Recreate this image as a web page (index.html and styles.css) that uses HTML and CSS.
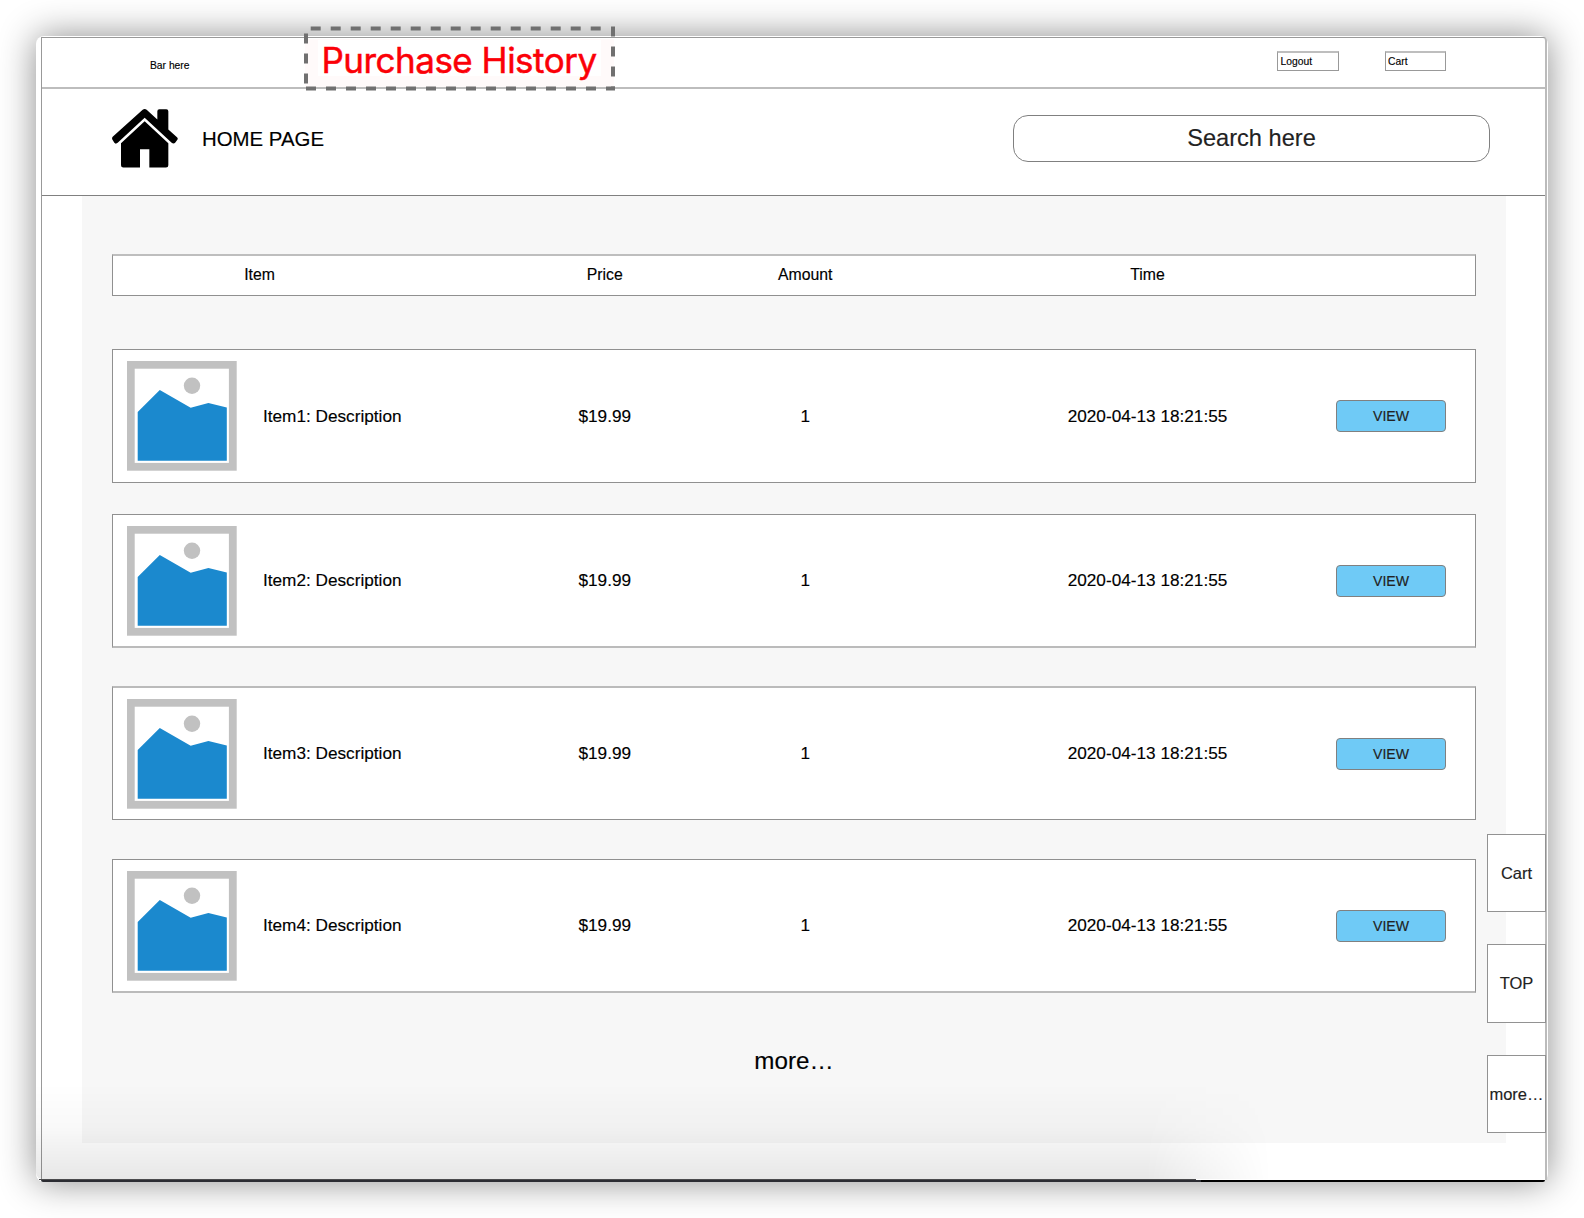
FILE: index.html
```html
<!DOCTYPE html>
<html lang="en">
<head>
<meta charset="utf-8">
<title>Purchase History</title>
<link rel="stylesheet" href="styles.css">
</head>
<body>
<svg class="defs" width="0" height="0">
  <symbol id="picture" viewBox="0 0 110 110">
    <rect x="3.8" y="3.8" width="102" height="102" fill="#fff" stroke="#c1c1c1" stroke-width="7.8"/>
    <circle cx="65" cy="24.8" r="8.2" fill="#c1c1c1"/>
    <path d="M10.7 51 L32.8 29 L63.7 46.8 L81.4 42.1 L99.8 46.6 V99.7 H10.7 Z" fill="#1b89ce"/>
  </symbol>
</svg>
<div class="window">
  <div class="frame">
    <div class="topbar">
      <span class="bar-label">Bar here</span>
      <nav class="top-links">
        <a class="top-link">Logout</a>
        <a class="top-link">Cart</a>
      </nav>
    </div>
    <header class="header">
      <svg class="home-icon" viewBox="336 328 198 176">
        <path d="M428 330 Q434 325 440 330 L472 359 V334 Q472 328 478 328 H499 Q505 328 505 334 V389 L531 412 Q535 416 532 420 L526 428 Q521 434 515 429 L434 354 L353 429 Q347 434 343 429 L337 419 Q335 415 338 411 Z"/>
        <path d="M434 364 L505 430 V496 Q505 503 498 503 H448 V448 H420 V503 H370 Q363 503 363 496 V430 Z"/>
      </svg>
      <h1 class="home-title">HOME PAGE</h1>
      <div class="search">Search here</div>
    </header>
    <main class="panel">
      <div class="table-head">
        <span class="head-item">Item</span><span>Price</span><span>Amount</span><span class="time">Time</span>
      </div>
      <section class="row row-first">
        <div class="item"><svg class="thumb"><use href="#picture"/></svg><span>Item1: Description</span></div>
        <span>$19.99</span><span>1</span><span class="time">2020-04-13 18:21:55</span><a class="view">VIEW</a>
      </section>
      <section class="row row-second">
        <div class="item"><svg class="thumb"><use href="#picture"/></svg><span>Item2: Description</span></div>
        <span>$19.99</span><span>1</span><span class="time">2020-04-13 18:21:55</span><a class="view">VIEW</a>
      </section>
      <section class="row row-third">
        <div class="item"><svg class="thumb"><use href="#picture"/></svg><span>Item3: Description</span></div>
        <span>$19.99</span><span>1</span><span class="time">2020-04-13 18:21:55</span><a class="view">VIEW</a>
      </section>
      <section class="row row-fourth">
        <div class="item"><svg class="thumb"><use href="#picture"/></svg><span>Item4: Description</span></div>
        <span>$19.99</span><span>1</span><span class="time">2020-04-13 18:21:55</span><a class="view">VIEW</a>
      </section>
      <p class="more">more…</p>
    </main>
  </div>
  <div class="bottom-shade"></div>
  <div class="edge"></div>
  <div class="edge-left"></div>
  <aside class="side">
    <a class="side-box">Cart</a>
    <a class="side-box">TOP</a>
    <a class="side-box">more…</a>
  </aside>
  <div class="callout">
    <div class="callout-text">Purchase History</div>
    <svg class="callout-lines" viewBox="0 0 312 66" fill="none" stroke="#707070" stroke-width="4">
      <path d="M6.7 2.5 H300" stroke-dasharray="10 10"/>
      <path d="M309 0.5 V62" stroke-dasharray="10 10"/>
      <path d="M2 62.5 H311" stroke-dasharray="10 10"/>
      <path d="M2 7.5 V59" stroke-dasharray="10 10"/>
    </svg>
  </div>
</div>
</body>
</html>
```
FILE: styles.css
```css
* { box-sizing: border-box; }

body {
  margin: 0;
  height: 1218px;
  padding: 36px;
  background: #fff;
  color: #000;
  font-family: "Liberation Sans", Arial, sans-serif;
  -webkit-text-stroke: 0.15px currentColor;
  overflow: hidden;
}

.defs { position: absolute; }

.window {
  position: relative;
  width: 1512px;
  height: 1146px;
  padding: 1px 1px 0 5px;
  background: #fff;
  border-radius: 8px;
  box-shadow: 0 0 36px rgba(0, 0, 0, 0.46);
}

.frame {
  height: 1143px;
  border: 1px solid #999;
  border-right: 2px solid #bbb;
  border-bottom: 0;
  border-top-right-radius: 4px;
}

.topbar {
  display: flex;
  justify-content: space-between;
  height: 51px;
  padding: 13px 99px 0 108px;
  border-bottom: 2px solid #bdbdbd;
  font-size: 10.3px;
}

.bar-label { padding-top: 9px; line-height: 12px; }

.top-links { display: flex; gap: 46px; }

.top-link {
  width: 61.5px;
  height: 20px;
  padding-left: 2.6px;
  border: 1px solid #999;
  border-top: 2px solid #bebebe;
  line-height: 17px;
}

.header {
  display: flex;
  height: 107px;
  padding: 20px 55px 0 70px;
  border-bottom: 1px solid #808080;
}

.home-icon { width: 66px; height: 59px; }

.home-title {
  margin: 18px 0 0 24px;
  font-size: 20.4px;
  font-weight: 400;
  line-height: 24px;
}

.search {
  width: 477px;
  height: 47px;
  margin: 6px 0 0 auto;
  border: 1px solid #808080;
  border-radius: 15px;
  color: #222;
  font-size: 23.6px;
  line-height: 44px;
  text-align: center;
}

.panel {
  width: 1424px;
  height: 947px;
  margin-left: 40px;
  padding: 58px 30px 0;
  background: #f7f7f7;
}

.table-head, .row {
  display: grid;
  grid-template-columns: 391.5px 200.5px 200.5px 53.5px 377px 110px;
  align-items: center;
  border: 1px solid #909090;
  background: #fff;
  text-align: center;
}

.table-head {
  height: 42px;
  padding-bottom: 1px;
  border-top: 2px solid #bebebe;
  font-size: 15.8px;
}

.head-item { padding-right: 98.5px; }
.time { grid-column: 5; }

.row {
  height: 134px;
  margin-top: 38px;
  font-size: 17.2px;
}

.row-first { margin-top: 53px; }
.row-first > span, .row-first .item span { padding-top: 1px; }
.row-second { margin-top: 31px; border-bottom: 2px solid #bbb; }
.row-third { border-top: 2px solid #bbb; }
.row-fourth { margin-top: 39px; border-bottom: 2px solid #bbb; }

.item { display: flex; align-items: center; }

.thumb { width: 110px; height: 110px; margin: 0 26px 0 14px; }

.view {
  height: 32px;
  border: 1px solid #808080;
  border-radius: 4px;
  background: #6fcaf6;
  color: #222;
  font-size: 14.1px;
  line-height: 30px;
}

.more {
  margin: 54px 0 0;
  font-size: 24.2px;
  line-height: 28px;
  text-align: center;
}

.bottom-shade {
  position: absolute;
  left: 0;
  bottom: 3px;
  width: 1250px;
  height: 96px;
  border-bottom-left-radius: 6px;
  background: linear-gradient(rgba(0, 0, 0, 0), rgba(0, 0, 0, 0.022) 45%, rgba(0, 0, 0, 0.095));
  -webkit-mask-image: linear-gradient(90deg, #000 1110px, rgba(0, 0, 0, 0.5) 1170px, transparent 1235px);
  mask-image: linear-gradient(90deg, #000 1110px, rgba(0, 0, 0, 0.5) 1170px, transparent 1235px);
}

.edge {
  position: absolute;
  left: 5px;
  right: 3px;
  bottom: 0;
  height: 2px;
  border-radius: 0 0 5px 5px;
  background: linear-gradient(90deg, #2b2c32 1160px, #000 1160px);
}

.edge-left {
  position: absolute;
  left: 3px;
  bottom: 2px;
  width: 1157px;
  height: 1px;
  background: #4b4b4d;
}

.side {
  position: absolute;
  top: 798px;
  right: 2px;
  display: flex;
  flex-direction: column;
  gap: 32.2px;
}

.side-box {
  width: 59px;
  height: 78.2px;
  border: 1px solid #929292;
  background: #fff;
  color: #222;
  font-size: 16.5px;
  line-height: 76px;
  text-align: center;
}

.callout {
  position: absolute;
  left: 268px;
  top: -10px;
  width: 312px;
  height: 66px;
  padding: 13px 0 0 1px;
}

.callout-text {
  width: 309px;
  height: 48px;
  border: solid #fffafa;
  border-width: 1px 13px 11px;
  background: #fff;
  color: #fb0007;
  font-family: Inter, sans-serif;
  font-size: 35px;
  letter-spacing: -0.5px;
  line-height: 41px;
  -webkit-text-stroke-width: 0.5px;
  white-space: nowrap;
  text-align: center;
  text-indent: -1px;
}

.callout-lines {
  position: absolute;
  inset: 0;
  width: 312px;
  height: 66px;
}
```
